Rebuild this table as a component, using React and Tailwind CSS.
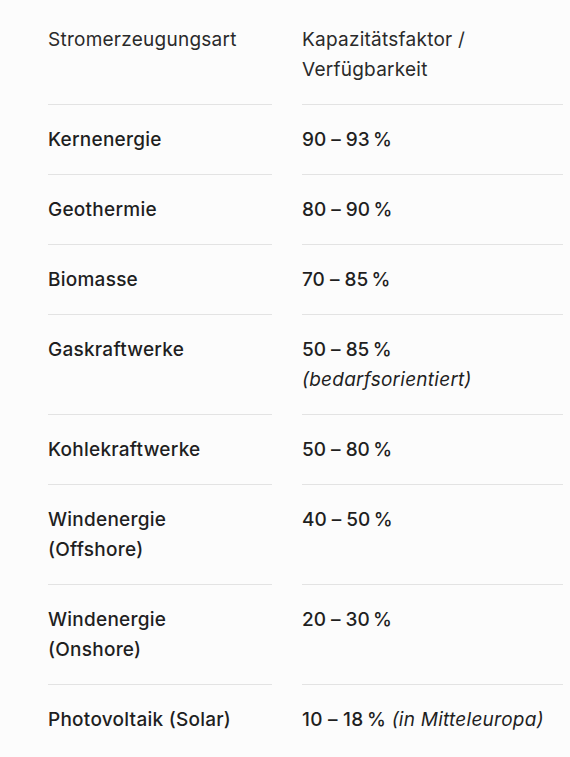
import React from 'react'

const rows = [
  { name: 'Kernenergie', value: '90 – 93\u202F%' },
  { name: 'Geothermie', value: '80 – 90\u202F%' },
  { name: 'Biomasse', value: '70 – 85\u202F%' },
  { name: 'Gaskraftwerke', value: '50 – 85\u202F%', note: '(bedarfsorientiert)', block: true },
  { name: 'Kohlekraftwerke', value: '50 – 80\u202F%' },
  { name: ['Windenergie', '(Offshore)'], value: '40 – 50\u202F%' },
  { name: ['Windenergie', '(Onshore)'], value: '20 – 30\u202F%' },
  { name: 'Photovoltaik (Solar)', value: '10 – 18\u202F%', note: '(in Mitteleuropa)' },
]

export default function App() {
  return (
    <div className="min-h-screen bg-[#fcfcfc] pt-[5px] pl-[48px] pr-[7px] text-[#1f1f1f]" style={{ fontFamily: 'Inter, "Open Sans", sans-serif' }}>
      <div className="grid grid-cols-[224px_1fr] gap-x-[30px] text-[19px] leading-[30px] tracking-[0.25px]">
        {/* header */}
        <div className="pt-5 pb-[19px] border-b border-[#e3e3e3] font-normal text-[#2a2a2a]">Stromerzeugungsart</div>
        <div className="pt-5 pb-[19px] border-b border-[#e3e3e3] font-normal text-[#2a2a2a]">
          Kapazitätsfaktor /<br />Verfügbarkeit
        </div>

        {rows.map((r, i) => {
          const last = i === rows.length - 1
          const border = last ? '' : 'border-b border-[#e3e3e3]'
          const key = Array.isArray(r.name) ? r.name.join(' ') : r.name
          return (
            <React.Fragment key={key}>
              <div className={`pt-5 pb-[19px] font-medium ${border}`}>
                {Array.isArray(r.name) ? (
                  <>
                    {r.name[0]}
                    <br />
                    {r.name[1]}
                  </>
                ) : (
                  r.name
                )}
              </div>
              <div className={`pt-5 pb-[19px] font-medium ${border}`}>
                {r.value}
                {r.note && r.block && <div className="italic font-normal">{r.note}</div>}
                {r.note && !r.block && <span className="italic font-normal"> {r.note}</span>}
              </div>
            </React.Fragment>
          )
        })}
      </div>
    </div>
  )
}
